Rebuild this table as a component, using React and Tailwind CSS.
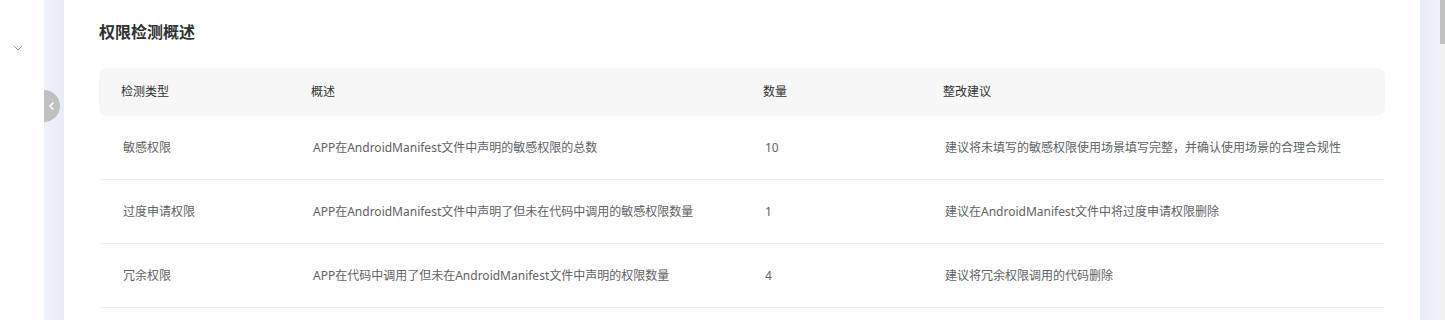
import React from 'react';

const rows = [
    {
        type: '敏感权限',
        desc: 'APP在AndroidManifest文件中声明的敏感权限的总数',
        count: '10',
        advice: '建议将未填写的敏感权限使用场景填写完整，并确认使用场景的合理合规性',
    },
    {
        type: '过度申请权限',
        desc: 'APP在AndroidManifest文件中声明了但未在代码中调用的敏感权限数量',
        count: '1',
        advice: '建议在AndroidManifest文件中将过度申请权限删除',
    },
    {
        type: '冗余权限',
        desc: 'APP在代码中调用了但未在AndroidManifest文件中声明的权限数量',
        count: '4',
        advice: '建议将冗余权限调用的代码删除',
    },
];

const cols = 'grid grid-cols-[190px_452px_180px_1fr]';

function App() {
    return (
        <div
            className="flex h-[320px] w-full overflow-hidden bg-white"
            style={{ fontFamily: '"Noto Sans", "Noto Sans CJK SC", sans-serif' }}
        >
            {/* collapsed sidebar */}
            <div className="w-[44px] shrink-0 bg-white pt-[43px] pl-[13px]">
                <svg width="10" height="10" viewBox="0 0 10 10" className="text-[#6a9fd6]">
                    <path d="M1 3 L5 7 L9 3" fill="none" stroke="currentColor" strokeWidth="1" />
                </svg>
            </div>

            {/* left gutter */}
            <div className="relative w-[20px] shrink-0 bg-gradient-to-r from-[#eef2f9] to-[#e7ecf6]">
                <button className="absolute left-0 top-[90px] flex h-[32px] w-[16px] items-center justify-center rounded-r-full bg-[#c0c0c0]">
                    <svg width="8" height="10" viewBox="0 0 8 10" className="text-white">
                        <path d="M5.5 1.5 L2 5 L5.5 8.5" fill="none" stroke="currentColor" strokeWidth="1.6" />
                    </svg>
                </button>
            </div>

            {/* main card */}
            <div className="flex-1 bg-white pl-[35px] pr-[35px]">
                <h2
                    className="mt-[20px] h-[22px] text-[16px] leading-[22px] font-bold text-[#303133]"
                    style={{ fontFamily: '"Noto Sans CJK SC", sans-serif' }}
                >
                    权限检测概述
                </h2>

                <div className="mt-[26px]">
                    <div className={`${cols} h-[48px] items-center rounded-lg bg-[#f7f7f7] text-[12px] text-[#333]`}>
                        <div className="pl-[22px]">检测类型</div>
                        <div className="pl-[22px]">概述</div>
                        <div className="pl-[22px]">数量</div>
                        <div className="pl-[22px]">整改建议</div>
                    </div>
                    {rows.map((row) => (
                        <div
                            key={row.type}
                            className={`${cols} h-[64px] items-center border-b border-[#eeeeee] text-[12px] text-[#606266]`}
                        >
                            <div className="pl-[24px]">{row.type}</div>
                            <div className="pl-[24px]">{row.desc}</div>
                            <div className="pl-[24px]">{row.count}</div>
                            <div className="pl-[24px]">{row.advice}</div>
                        </div>
                    ))}
                </div>
            </div>

            {/* right gutter */}
            <div className="w-[20px] shrink-0 bg-gradient-to-r from-[#e7ecf6] to-[#eef2f9]" />

            {/* scrollbar */}
            <div className="w-[5px] shrink-0 bg-[#f1f1f1]">
                <div className="h-[44px] w-full bg-[#c1c1c1]" />
            </div>
        </div>
    );
}

export default App;
